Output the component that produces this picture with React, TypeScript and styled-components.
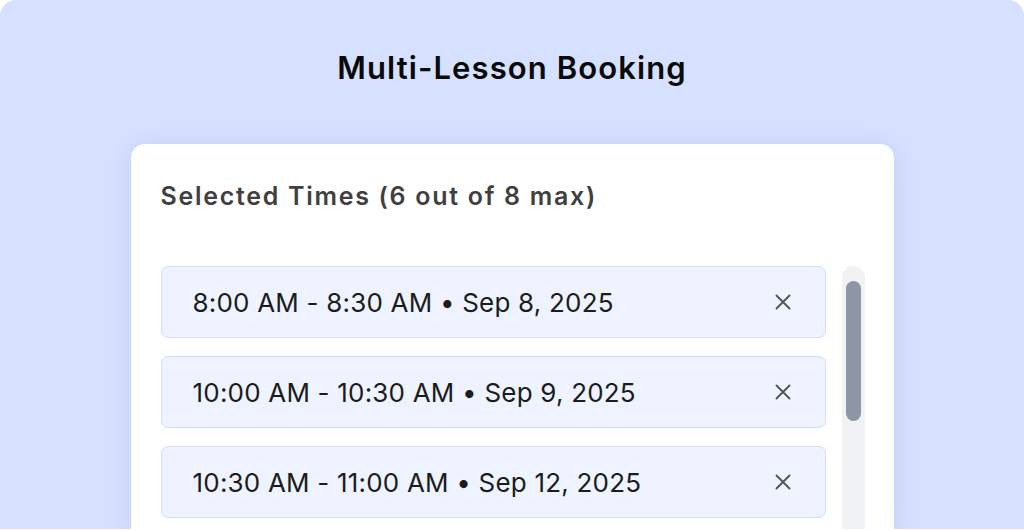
import React from 'react';
import styled, { createGlobalStyle } from 'styled-components';

const GlobalStyle = createGlobalStyle`
  html, body {
    margin: 0;
    padding: 0;
    background: #ffffff;
  }
  * {
    box-sizing: border-box;
  }
`;

const Frame = styled.div`
  width: 1024px;
  height: 529px;
  background: #d6e0ff;
  border-radius: 16px 16px 0 0;
  overflow: hidden;
  display: flex;
  flex-direction: column;
  align-items: center;
  font-family: Inter, 'Noto Sans', sans-serif;
`;

const Title = styled.h1`
  margin: 50px 0 0;
  font-size: 31px;
  line-height: 36px;
  font-weight: 600;
  color: #0a0a0a;
  letter-spacing: 1.1px;
`;

const Card = styled.section`
  margin-top: 58px;
  width: 763px;
  flex: 1;
  background: #ffffff;
  border-radius: 14px 14px 0 0;
  box-shadow: 0 4px 24px rgba(70, 90, 170, 0.12);
  padding: 36px 29px 0 30px;
  overflow: hidden;
`;

const Heading = styled.h2`
  margin: 0;
  font-size: 25px;
  line-height: 32px;
  font-weight: 600;
  color: #404040;
  letter-spacing: 1.7px;
`;

const ListRow = styled.div`
  margin-top: 54px;
  display: flex;
  gap: 16px;
  align-items: flex-start;
`;

const List = styled.ul`
  list-style: none;
  margin: 0;
  padding: 0;
  width: 665px;
  height: 264px;
  overflow: hidden;
  display: flex;
  flex-direction: column;
  gap: 18px;
`;

const Item = styled.li`
  flex: none;
  height: 72px;
  display: flex;
  align-items: center;
  justify-content: space-between;
  padding: 0 34px 0 31px;
  background: #eef3ff;
  border: 1.5px solid #d2ddfb;
  border-radius: 7px;
  font-size: 26px;
  color: #1c1c1c;
  letter-spacing: 0.2px;
`;

const RemoveButton = styled.button`
  border: none;
  background: none;
  padding: 0;
  width: 16px;
  height: 16px;
  display: flex;
  cursor: pointer;
  color: #555555;
`;

const Track = styled.div`
  flex: none;
  width: 23px;
  height: 300px;
  background: #f1f2f4;
  border-radius: 12px;
  padding: 15px 4px 0;
`;

const Thumb = styled.div`
  height: 140px;
  background: #8e95a4;
  border-radius: 8px;
`;

const slots = [
  '8:00 AM - 8:30 AM • Sep 8, 2025',
  '10:00 AM - 10:30 AM • Sep 9, 2025',
  '10:30 AM - 11:00 AM • Sep 12, 2025',
  '1:00 PM - 1:30 PM • Sep 15, 2025',
  '2:00 PM - 2:30 PM • Sep 18, 2025',
  '3:30 PM - 4:00 PM • Sep 22, 2025',
];

function CloseIcon() {
  return (
    <svg width="16" height="16" viewBox="0 0 16 16" fill="none">
      <path d="M1.5 1.5L14.5 14.5M14.5 1.5L1.5 14.5" stroke="currentColor" strokeWidth="1.9" strokeLinecap="round" />
    </svg>
  );
}

export default function App() {
  return (
    <>
      <GlobalStyle />
      <Frame>
        <Title>Multi-Lesson Booking</Title>
        <Card>
          <Heading>Selected Times (6 out of 8 max)</Heading>
          <ListRow>
            <List>
              {slots.map((s) => (
                <Item key={s}>
                  <span>{s}</span>
                  <RemoveButton aria-label="Remove">
                    <CloseIcon />
                  </RemoveButton>
                </Item>
              ))}
            </List>
            <Track>
              <Thumb />
            </Track>
          </ListRow>
        </Card>
      </Frame>
    </>
  );
}
